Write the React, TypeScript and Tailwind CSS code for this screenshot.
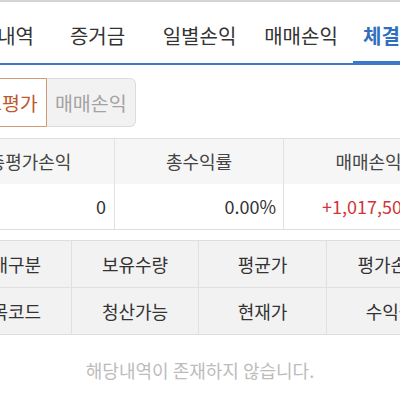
export default function App() {
  const font = { fontFamily: '"Noto Sans CJK KR", "Noto Sans", sans-serif' };

  return (
    <div
      className="w-[400px] h-[400px] overflow-hidden bg-white border-t-2 border-[#d4d4d4]"
      style={font}
    >
      {/* Tabs */}
      <div className="h-[63px] flex items-stretch border-b-[2px] border-[#3b78c8] whitespace-nowrap text-[20px] text-[#333]">
        <div className="-ml-[66px] w-[100px] shrink-0 pt-[7px] flex items-center justify-end">주문내역</div>
        <div className="w-[127px] shrink-0 pt-[7px] flex items-center justify-center">증거금</div>
        <div className="w-[77px] shrink-0 pt-[7px] flex items-center justify-center">일별손익</div>
        <div className="w-[115px] shrink-0 pl-[11px] pt-[7px] flex items-center justify-center">매매손익</div>
        <div className="relative shrink-0 pl-[10px] pr-[10px] pt-[7px] flex items-center font-bold text-[#2f6fc0]">
          체결내역
          <div className="absolute left-0 right-0 -bottom-[2px] h-[4px] bg-[#3b78c8]" />
        </div>
      </div>

      {/* Toggle */}
      <div className="mt-[13px] flex h-[49px] whitespace-nowrap text-[19.5px]">
        <div className="-ml-[43px] pl-[8px] pr-[8px] flex items-center border border-[#cf9a74] bg-white text-[#bd5a2c] rounded-l-[6px]">
          잔고평가
        </div>
        <div className="w-[89px] flex items-center justify-center border border-l-0 border-[#dcdcdc] bg-[#f2f2f2] text-[#a3a3a3] rounded-r-[6px]">
          매매손익
        </div>
      </div>

      {/* Summary */}
      <div className="mt-[11px] border-t border-b border-[#dedede] whitespace-nowrap text-[18px]">
        <div className="-ml-[54px] grid grid-cols-[169px_169px_169px] h-[45px] bg-[#f6f6f6] text-[#444]">
          <div className="flex items-center justify-center border-r border-[#e2e2e2]">총평가손익</div>
          <div className="flex items-center justify-center border-r border-[#e2e2e2]">총수익률</div>
          <div className="flex items-center justify-center">매매손익</div>
        </div>
        <div className="-ml-[54px] grid grid-cols-[169px_169px_169px] h-[45px] bg-white text-[#333]">
          <div className="flex items-center justify-end pr-[8px] border-r border-[#e2e2e2]">0</div>
          <div className="flex items-center justify-end pr-[7px] border-r border-[#e2e2e2]">0.00%</div>
          <div className="flex items-center pl-[38px] text-[#d0353a]">+1,017,500</div>
        </div>
      </div>

      {/* Holdings header */}
      <div className="mt-[10px] border-t border-b border-[#dedede] bg-[#f2f2f2] whitespace-nowrap text-[18px] text-[#333]">
        <div className="-ml-[55px] grid grid-cols-[127px_127px_128px_127px] h-[47px] border-b border-[#e0e0e0]">
          <div className="flex items-center justify-center border-r border-[#e0e0e0]">매매구분</div>
          <div className="flex items-center justify-center border-r border-[#e0e0e0]">보유수량</div>
          <div className="flex items-center justify-center border-r border-[#e0e0e0]">평균가</div>
          <div className="flex items-center justify-center">평가손익</div>
        </div>
        <div className="-ml-[55px] grid grid-cols-[127px_127px_128px_127px] h-[46px]">
          <div className="flex items-center justify-center border-r border-[#e0e0e0]">종목코드</div>
          <div className="flex items-center justify-center border-r border-[#e0e0e0]">청산가능</div>
          <div className="flex items-center justify-center border-r border-[#e0e0e0]">현재가</div>
          <div className="flex items-center justify-center">수익률</div>
        </div>
      </div>

      {/* Empty */}
      <div className="h-[70px] flex items-center justify-center text-[18px] text-[#bcbcbc]">
        해당내역이 존재하지 않습니다.
      </div>
    </div>
  );
}
